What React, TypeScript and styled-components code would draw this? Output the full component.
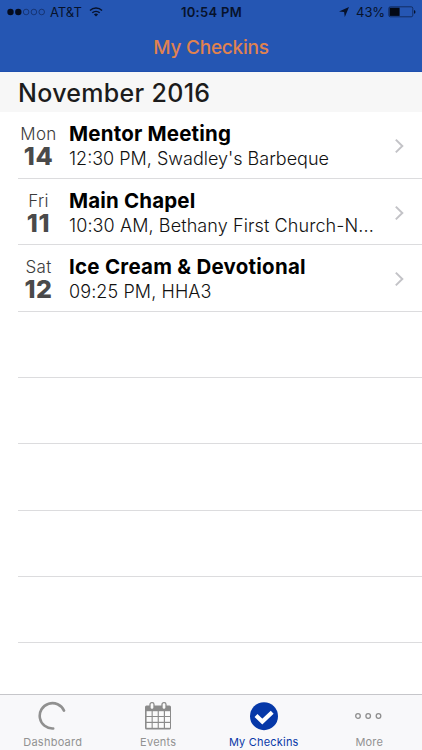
import React from "react";
import styled, { createGlobalStyle } from "styled-components";

const Global = createGlobalStyle`
  * { box-sizing: border-box; }
  body { margin: 0; background: #fff; }
`;

const Screen = styled.div`
  width: 422px;
  height: 750px;
  display: flex;
  flex-direction: column;
  overflow: hidden;
  background: #fff;
  font-family: Inter, "Liberation Sans", sans-serif;
  white-space: nowrap;
`;

const Header = styled.header`
  flex: none;
  height: 72px;
  background: #2556b3;
  border-bottom: 1px solid #1f4fae;
`;

const StatusBar = styled.div`
  height: 23px;
  display: grid;
  grid-template-columns: 1fr auto 1fr;
  align-items: center;
  padding: 0 6px 0 7px;
  color: #07122b;
  font-size: 13px;
`;

const StatusGroup = styled.div<{ $end?: boolean }>`
  display: flex;
  align-items: center;
  justify-content: ${(p) => (p.$end ? "flex-end" : "flex-start")};
`;

const Carrier = styled.span`
  margin: 0 7px 0 4px;
`;

const Clock = styled.span`
  font-weight: 600;
  letter-spacing: 0.3px;
`;

const Percent = styled.span`
  margin: 0 3px 0 7px;
  letter-spacing: -0.1px;
`;

const NavTitle = styled.h1`
  margin: 0;
  height: 48px;
  line-height: 49px;
  text-align: center;
  color: #e0824f;
  font-size: 19px;
  font-weight: 500;
  letter-spacing: -0.25px;
`;

const Month = styled.h2`
  flex: none;
  height: 40px;
  margin: 0;
  padding-left: 18px;
  line-height: 42px;
  background: #f7f7f7;
  color: #1c1c1c;
  font-size: 25px;
  font-weight: 500;
  letter-spacing: 0.3px;
`;

const List = styled.ul`
  flex: 1;
  min-height: 0;
  overflow: hidden;
  margin: 0;
  padding: 0 0 0 18px;
  list-style: none;
`;

const Row = styled.li`
  height: 66.33px;
  display: flex;
  padding-top: 11px;
  border-bottom: 1px solid #dcdcde;

  &:first-child {
    height: 67px;
  }
`;

const DateBox = styled.div`
  width: 41px;
  margin-right: 10px;
  text-align: center;
`;

const Weekday = styled.div`
  font-size: 17px;
  line-height: 22px;
  font-weight: 300;
  color: #3c3c3c;
  letter-spacing: 0.3px;
`;

const DayNumber = styled.div`
  font-size: 25px;
  line-height: 22px;
  font-weight: 800;
  color: #4a4a4a;
  letter-spacing: 0.6px;
`;

const Info = styled.div`
  width: 312px;
`;

const Name = styled.div<{ $track: number }>`
  font-size: 20.5px;
  line-height: 22px;
  font-weight: 700;
  color: #000;
  letter-spacing: ${(p) => p.$track}px;
`;

const Details = styled.div<{ $track: number }>`
  font-size: 18px;
  line-height: 27px;
  font-weight: 300;
  color: #111;
  letter-spacing: ${(p) => p.$track}px;
`;

const Chevron = styled.svg`
  margin: 15px 0 0 12px;
  width: 12px;
  height: 16px;
  flex: none;
`;

const TabBar = styled.nav`
  flex: 0 0 56px;
  display: grid;
  grid-template-columns: repeat(4, 1fr);
  background: #f8f8fa;
  border-top: 1px solid #c6c6ca;
`;

const Tab = styled.div<{ $active?: boolean; $track: number }>`
  display: flex;
  flex-direction: column;
  align-items: center;
  padding-top: 6px;
  color: ${(p) => (p.$active ? "#0a38a8" : "#929292")};
  font-size: 11px;
  line-height: 16px;
  letter-spacing: ${(p) => p.$track}px;
`;

const TabIcon = styled.svg`
  width: 30px;
  height: 30px;
  margin-bottom: 3px;
`;

const checkins = [
  { weekday: "Mon", day: "14", name: "Mentor Meeting", details: "12:30 PM, Swadley's Barbeque", nameTrack: 0.19, detailTrack: 0 },
  { weekday: "Fri", day: "11", name: "Main Chapel", details: "10:30 AM, Bethany First Church-N...", nameTrack: 0.16, detailTrack: 0.1 },
  { weekday: "Sat", day: "12", name: "Ice Cream & Devotional", details: "09:25 PM, HHA3", nameTrack: 0.25, detailTrack: 0.1 },
];

const emptyRows = [0, 1, 2, 3, 4];

function Signal() {
  return (
    <svg width="39" height="8" viewBox="0 0 39 8">
      {[0, 1, 2, 3, 4].map((i) => (
        <circle key={i} cx={3.5 + i * 7.8} cy="4" r={i < 2 ? 3.2 : 2.8} fill={i < 2 ? "#050c1e" : "none"} stroke="#10275a" strokeWidth={i < 2 ? 0 : 0.7} />
      ))}
    </svg>
  );
}

function Wifi() {
  return (
    <svg width="14" height="10" viewBox="0 0 14 10" fill="none" stroke="#07122b">
      <path d="M1 3.5C4.3.3 9.7.3 13 3.5" strokeWidth="1.5" />
      <path d="M3.3 5.8C5.4 3.9 8.6 3.9 10.7 5.8" strokeWidth="1.5" />
      <path d="M7 9.6 4.9 7.4Q7 5.8 9.1 7.4Z" fill="#07122b" stroke="none" />
    </svg>
  );
}

function Battery() {
  return (
    <svg width="28" height="12" viewBox="0 0 28 12">
      <rect x=".8" y=".8" width="24" height="10" rx="1.6" fill="none" stroke="#0d2351" strokeWidth=".8" />
      <rect x="1.6" y="1.7" width="10" height="8.2" fill="#030814" />
      <path d="M26 4q1.5.4 1.5 1.9T26 7.8Z" fill="#07122b" />
    </svg>
  );
}

export default function App() {
  return (
    <>
      <Global />
      <Screen>
        <Header>
          <StatusBar>
            <StatusGroup>
              <Signal />
              <Carrier>AT&amp;T</Carrier>
              <Wifi />
            </StatusGroup>
            <Clock>10:54 PM</Clock>
            <StatusGroup $end>
              <svg width="10" height="10" viewBox="0 0 10 10">
                <path d="M10 0 5.8 10 5.1 5.1 0 4.5Z" fill="#07122b" />
              </svg>
              <Percent>43%</Percent>
              <Battery />
            </StatusGroup>
          </StatusBar>
          <NavTitle>My Checkins</NavTitle>
        </Header>
        <Month>November 2016</Month>
        <List>
          {checkins.map((c) => (
            <Row key={c.name}>
              <DateBox>
                <Weekday>{c.weekday}</Weekday>
                <DayNumber>{c.day}</DayNumber>
              </DateBox>
              <Info>
                <Name $track={c.nameTrack}>{c.name}</Name>
                <Details $track={c.detailTrack}>{c.details}</Details>
              </Info>
              <Chevron viewBox="0 0 12 16">
                <path d="M2.8 1.6 9.3 8 2.8 14.4" fill="none" stroke="#c3c3c7" strokeWidth="2" />
              </Chevron>
            </Row>
          ))}
          {emptyRows.map((n) => (
            <Row key={n} />
          ))}
        </List>
        <TabBar>
          <Tab $track={0.25}>
            <TabIcon viewBox="0 0 30 30">
              <path d="M26 9.6A12.7 12.7 0 1 0 15.2 27.5" fill="none" stroke="#909090" strokeWidth="2.6" strokeLinecap="round" />
            </TabIcon>
            Dashboard
          </Tab>
          <Tab $track={0.25}>
            <TabIcon viewBox="0 0 30 30">
              <rect x="2" y="4.5" width="26" height="24" rx="1.5" fill="#8b8b8b" />
              <g fill="#fafafa">
                {[10.2, 16, 22].map((y) =>
                  [3.6, 9.7, 15.8, 22].map((x) => <rect key={`${x}-${y}`} x={x} y={y} width="5" height="4.8" />)
                )}
              </g>
              <rect x="7" y="1.7" width="4" height="6.8" rx="1.8" fill="#fafafa" stroke="#8b8b8b" strokeWidth="1.3" />
              <rect x="19" y="1.7" width="4" height="6.8" rx="1.8" fill="#fafafa" stroke="#8b8b8b" strokeWidth="1.3" />
            </TabIcon>
            Events
          </Tab>
          <Tab $active $track={0.2}>
            <TabIcon viewBox="0 0 30 30">
              <circle cx="15" cy="15.2" r="14" fill="#0638a8" />
              <path d="m7 14.5 6.3 6L23.2 11.3" fill="none" stroke="#fff" strokeWidth="4.2" />
            </TabIcon>
            My Checkins
          </Tab>
          <Tab $track={0.15}>
            <TabIcon viewBox="0 0 30 30" fill="none" stroke="#8e8e8e" strokeWidth="1.3">
              <circle cx="4" cy="15" r="2.3" />
              <circle cx="14.2" cy="15" r="2.3" />
              <circle cx="24.5" cy="15" r="2.3" />
            </TabIcon>
            More
          </Tab>
        </TabBar>
      </Screen>
    </>
  );
}
